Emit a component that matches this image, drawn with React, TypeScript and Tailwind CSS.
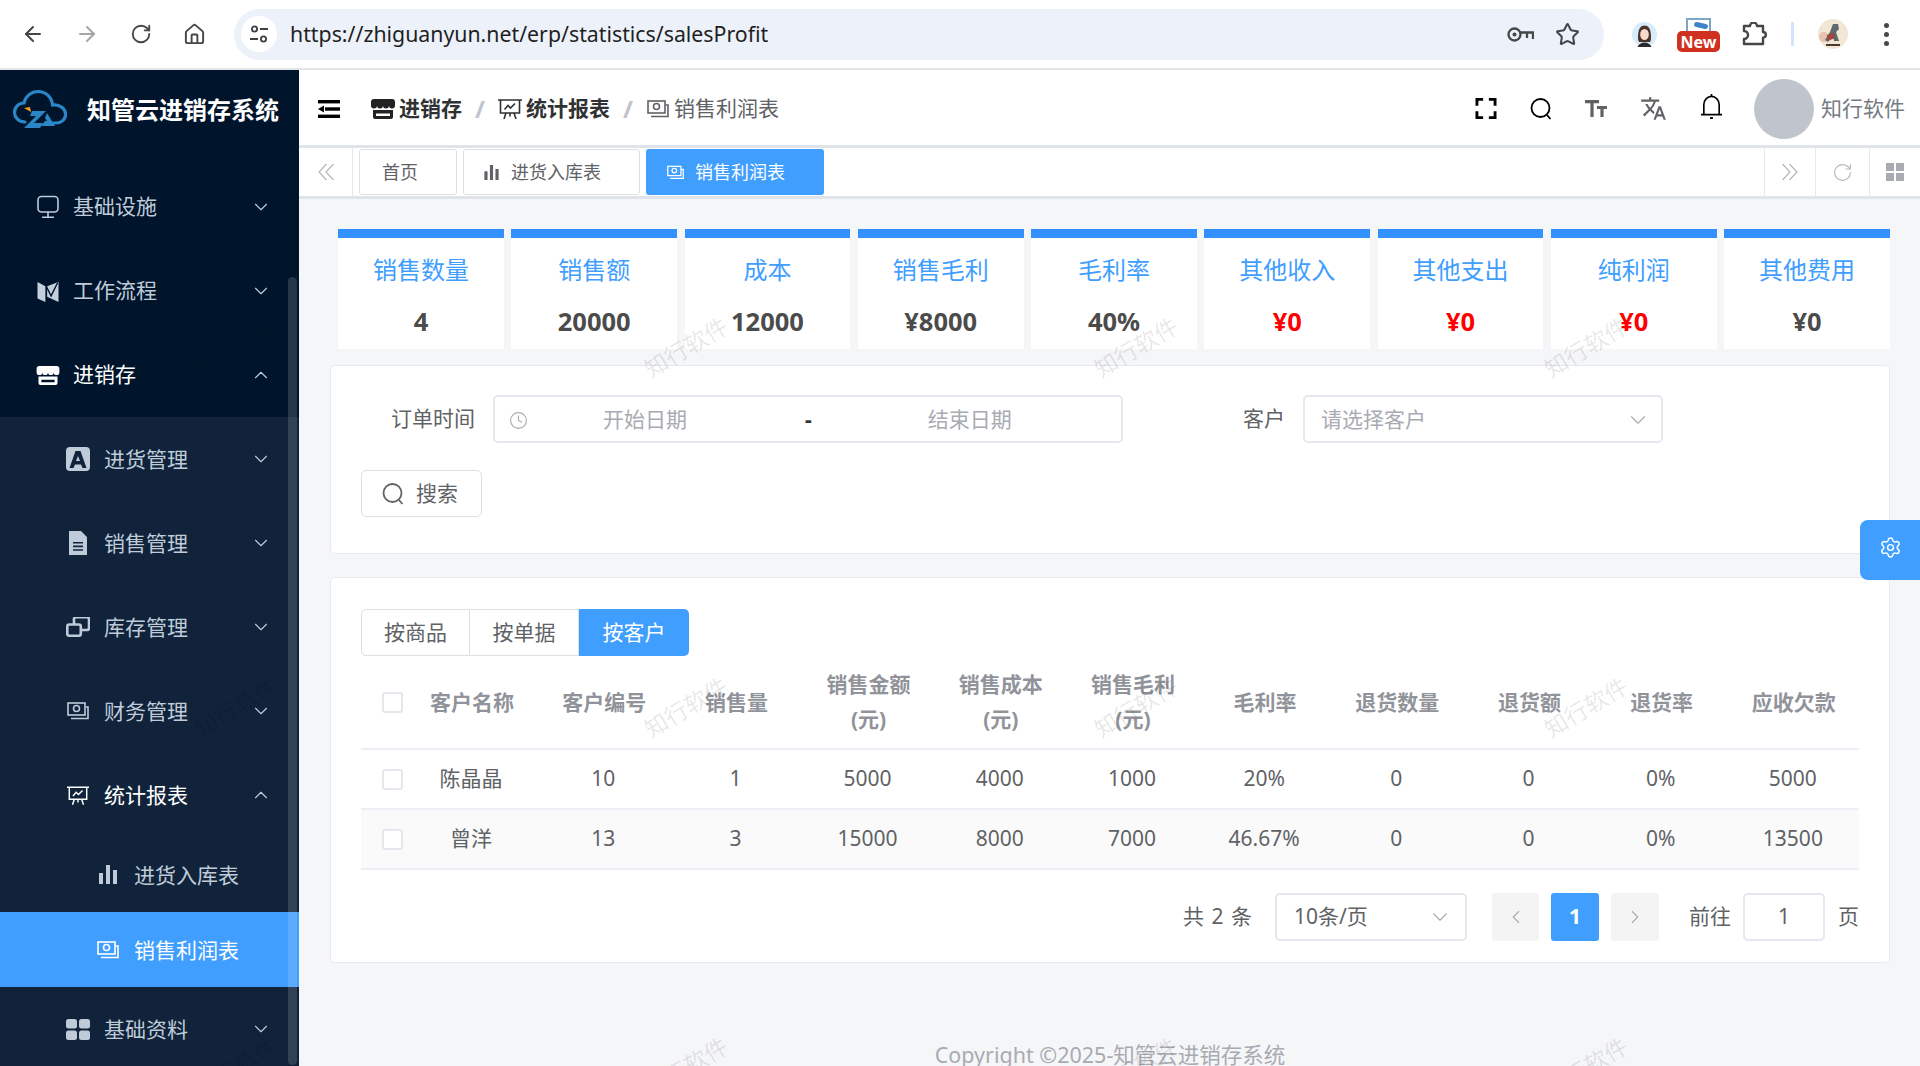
import React from 'react';
import {
  ArrowLeft,
  ArrowRight,
  ChevronDown,
  ChevronLeft,
  ChevronRight,
  ChevronUp,
  Clock,
  Home,
  RotateCw,
  Settings,
  Star,
} from 'lucide-react';
import { MdTranslate } from 'react-icons/md';

type IconProps = { className?: string };

const StoreIcon = ({ className }: IconProps) => (
  <svg viewBox="0 0 24 20" fill="currentColor" className={className}>
    <path d="M3 0h18a3 3 0 0 1 3 3v3.500a3 3 0 0 1-6 0 3 3 0 0 1-6 0 3 3 0 0 1-6 0 3 3 0 0 1-6 0V3a3 3 0 0 1 3-3z" />
    <path fillRule="evenodd" d="M2 11h20v7a2 2 0 0 1-2 2H4a2 2 0 0 1-2-2v-7zm3 3.500V17h14v-2.500H5z" />
  </svg>
);

const MapIcon = ({ className }: IconProps) => (
  <svg viewBox="0 0 24 24" fill="currentColor" className={className}>
    <path d="M0 1l9 5v18l-9-4z" />
    <path d="M11 6L24 1v23l-13-6z" />
    <path d="M10 6l5.500 11L23 2" fill="none" stroke="#00152b" strokeWidth="1.600" />
  </svg>
);

const MonitorIcon = ({ className }: IconProps) => (
  <svg viewBox="0 0 24 24" fill="none" stroke="currentColor" strokeWidth="1.600" className={className}>
    <rect x="2" y="1.500" width="20" height="15.500" rx="3.500" />
    <path d="M12 17v5M6 22.200h12" />
  </svg>
);

const BadgeAIcon = ({ className }: IconProps) => (
  <svg viewBox="0 0 24 24" fill="currentColor" className={className}>
    <path
      fillRule="evenodd"
      d="M4 0h16a4 4 0 0 1 4 4v16a4 4 0 0 1-4 4H4a4 4 0 0 1-4-4V4a4 4 0 0 1 4-4zm5.500 4L3.500 21h4l1.500-3.500h6l1.500 3.500h4L14.500 4h-5zM12 9l2 5h-4l2-5z"
    />
  </svg>
);

const DocIcon = ({ className }: IconProps) => (
  <svg viewBox="0 0 18 24" fill="currentColor" className={className}>
    <path fillRule="evenodd" d="M0 0h12l6 6v18H0V0zm4 11v1.600h10V11H4zm0 3.600v1.600h10v-1.600H4zm0 3.600v1.600h10v-1.600H4z" />
  </svg>
);

const CopyIcon = ({ className }: IconProps) => (
  <svg viewBox="0 0 24 20" fill="none" stroke="currentColor" strokeWidth="2.600" className={className}>
    <path d="M8 7V3a2 2 0 0 1 2-2.700h11a2 2 0 0 1 2 2V11a2 2 0 0 1-2 2h-6" />
    <rect x="1.300" y="7.500" width="13.500" height="11.200" rx="2" />
  </svg>
);

const MoneyIcon = ({ className }: IconProps) => (
  <svg viewBox="0 0 22 18" fill="none" stroke="currentColor" strokeWidth="1.600" className={className}>
    <rect x="1" y="1" width="17" height="12" />
    <circle cx="9.500" cy="6.500" r="3" />
    <path d="M4 16.500h17V5h-2.500" />
  </svg>
);

const ChartIcon = ({ className }: IconProps) => (
  <svg viewBox="0 0 24 20" fill="none" stroke="currentColor" strokeWidth="1.600" className={className}>
    <path d="M0 1h24M2.500 1v13h19V1M8 14l-2 6M16 14l2 6M12 14v3.500" />
    <path d="M6.500 10.500l3.500-4 2.500 2.500L17 4.500" />
  </svg>
);

const BarsIcon = ({ className }: IconProps) => (
  <svg viewBox="0 0 18 19" fill="currentColor" className={className}>
    <rect x="0" y="8" width="4" height="11" />
    <rect x="7" y="0" width="4" height="19" />
    <rect x="14" y="5" width="4" height="14" />
  </svg>
);

const GridIcon = ({ className }: IconProps) => (
  <svg viewBox="0 0 24 21" fill="currentColor" className={className}>
    <rect x="0" y="0" width="11" height="9.500" rx="2.500" />
    <rect x="13" y="0" width="11" height="9.500" rx="2.500" />
    <rect x="0" y="11.500" width="11" height="9.500" rx="2.500" />
    <rect x="13" y="11.500" width="11" height="9.500" rx="2.500" />
  </svg>
);

const SearchIcon = ({ className }: IconProps) => (
  <svg viewBox="0 0 22 22" fill="none" stroke="currentColor" strokeWidth="1.800" className={className}>
    <circle cx="10.500" cy="10" r="9" />
    <path d="M17 17l3.500 4" />
  </svg>
);

const FullscreenIcon = ({ className }: IconProps) => (
  <svg viewBox="0 0 22 22" fill="none" stroke="currentColor" strokeWidth="3" className={className}>
    <path d="M1.500 8V1.500H8M14 1.500h6.500V8M20.500 14v6.500H14M8 20.500H1.500V14" />
  </svg>
);

const HamburgerIcon = ({ className }: IconProps) => (
  <svg viewBox="0 0 22 18" fill="currentColor" className={className}>
    <rect x="0" y="0" width="22" height="3.400" />
    <rect x="7" y="7.300" width="15" height="3.400" />
    <rect x="0" y="14.600" width="22" height="3.400" />
    <path d="M0 9l6-3.600v7.200z" />
  </svg>
);

const TextSizeIcon = ({ className }: IconProps) => (
  <svg viewBox="0 0 22 17" fill="none" stroke="currentColor" strokeWidth="3.200" className={className}>
    <path d="M0 1.600h14M7 1.600V17M12 7.500h10M17 7.500V17" />
  </svg>
);

const BellIcon = ({ className }: IconProps) => (
  <svg viewBox="0 0 24 26" fill="none" stroke="currentColor" strokeWidth="1.700" className={className}>
    <path d="M4 21V11a8 8.500 0 0 1 16 0v10" />
    <path d="M1 21.500h22M12 0v2.500" />
    <path d="M10.500 25h3" strokeWidth="2" />
  </svg>
);

const KeyIcon = ({ className }: IconProps) => (
  <svg viewBox="0 0 27 15" fill="none" stroke="currentColor" strokeWidth="2.300" className={className}>
    <circle cx="7.500" cy="7.500" r="6" />
    <circle cx="7.500" cy="7.500" r="2" fill="currentColor" stroke="none" />
    <path d="M13.500 5.500H26V12M20 5.500V11" />
  </svg>
);

const DoubleLeft = ({ className }: IconProps) => (
  <svg viewBox="0 0 16 18" fill="none" stroke="currentColor" strokeWidth="1.200" className={className}>
    <path d="M8.500 1L1 9l7.500 8M15.500 1L8 9l7.500 8" />
  </svg>
);

const DoubleRight = ({ className }: IconProps) => (
  <svg viewBox="0 0 16 18" fill="none" stroke="currentColor" strokeWidth="1.200" className={className}>
    <path d="M7.500 1L15 9l-7.500 8M0.500 1L8 9l-7.500 8" />
  </svg>
);

const Logo = () => (
  <svg viewBox="0 0 56 42" fill="none" className="h-[42px] w-[56px]">
    <path
      d="M13 33C6 33 2.500 28 2.500 23.500 2.500 18 7 14 12 14c1.500-7 7.500-11.500 14-11.500 8.500 0 14 6.500 14.500 13.500 7-1 13 3.500 13 9.500 0 5-4 8.500-9.500 8.500h-3"
      stroke="#2a86c6"
      strokeWidth="3.200"
      strokeLinecap="round"
    />
    <path d="M12 19l6-1 1 5z" fill="#f0a020" />
    <path d="M20 22h14l-12 12h9l-3 5H12l12-12h-6z" fill="#2a86c6" />
    <path d="M35 24l8 13h-14l4-5h2l-2-3z" fill="#2a86c6" />
  </svg>
);

const TuneIcon = () => (
  <svg viewBox="0 0 20 20" fill="none" stroke="#3c4043" strokeWidth="1.800" className="h-[20px] w-[20px]">
    <circle cx="5.500" cy="5" r="2.600" />
    <path d="M11 5h8M1 15h8" />
    <circle cx="14.500" cy="15" r="2.600" />
  </svg>
);

const PuzzleIcon = () => (
  <svg viewBox="0 0 25 24" fill="none" stroke="#444746" strokeWidth="2.400" strokeLinejoin="round" className="h-[24px] w-[25px]">
    <path d="M2 4h6a3.500 3.500 0 0 1 7 0h6v6a2.800 2.800 0 0 1 0 5.600V22H2v-5a4 4 0 0 0 0-8V4z" />
  </svg>
);

const GirlAvatar = () => (
  <svg viewBox="0 0 25 25" className="h-[25px] w-[25px]">
    <circle cx="12.500" cy="12.500" r="12.500" fill="#d6ecfb" />
    <path d="M6 15C6 6 9 3.500 12.500 3.500S19 6 19 15c0 3-.5 4-1 5H7c-.5-1-1-2-1-5z" fill="#4a3228" />
    <ellipse cx="12.500" cy="12.500" rx="4.300" ry="5.500" fill="#f8dccb" />
    <path d="M5.500 25c1-3 4-4.500 7-4.500s6 1.500 7 4.500z" fill="#2b2b2b" />
  </svg>
);

const ArtAvatar = () => (
  <svg viewBox="0 0 30 30" className="h-[30px] w-[30px]">
    <circle cx="15" cy="15" r="15" fill="#f2e6d4" />
    <circle cx="6" cy="18" r="5" fill="#e7c3b0" />
    <path d="M15 5h5l1 5-3 3 3 9h-5l-1-6-5 7-3-2 5-8z" fill="#5c6a6e" />
    <path d="M9 16l7-2 1 5-7 3z" fill="#a0473e" />
    <path d="M8 25h14v2H8z" fill="#4a3a30" />
  </svg>
);

const NewBadge = () => (
  <div className="relative h-[34px] w-[43px]">
    <div className="absolute left-[9px] top-0 h-[18px] w-[25px] border-2 border-[#7ea6c9] bg-white">
      <div className="ml-[6px] mt-[3px] h-[5px] w-[14px] rotate-12 rounded-full bg-[#3d85c6]" />
    </div>
    <div className="absolute bottom-0 left-0 flex h-[21px] w-[43px] items-center justify-center rounded-[5px] bg-[#d0301f] text-[16px] font-bold leading-none text-white">
      New
    </div>
  </div>
);

const ChromeBar = () => (
  <div className="flex h-[70px] shrink-0 items-center border-b-2 border-[#e4e5e7] bg-white">
    <div className="flex w-[234px] items-center pl-[21px] text-[#444746]">
      <ArrowLeft size={24} strokeWidth={2} />
      <ArrowRight size={24} strokeWidth={2} className="ml-[30px] text-[#a3a5a8]" />
      <RotateCw size={22} strokeWidth={2} className="ml-[31px]" />
      <Home size={23} strokeWidth={2} className="ml-[31px]" />
    </div>
    <div className="flex h-[51px] w-[1370px] items-center rounded-full bg-[#ecf1fa] pl-[7px] pr-[24px]">
      <div className="flex h-[36px] w-[36px] items-center justify-center rounded-full bg-white">
        <TuneIcon />
      </div>
      <span className="ml-[13px] text-[21.3px] text-[#1f1f1f]">https://zhiguanyun.net/erp/statistics/salesProfit</span>
      <KeyIcon className="ml-auto h-[15px] w-[27px] text-[#444746]" />
      <Star size={25} strokeWidth={2} className="ml-[21px] text-[#444746]" />
    </div>
    <div className="ml-[28px]">
      <GirlAvatar />
    </div>
    <div className="ml-[20px] mt-[2px]">
      <NewBadge />
    </div>
    <div className="ml-[22px]">
      <PuzzleIcon />
    </div>
    <div className="ml-[24px] h-[24px] w-[3px] bg-[#d3e3fd]" />
    <div className="ml-[24px]">
      <ArtAvatar />
    </div>
    <div className="ml-[36px] flex flex-col gap-[4px]">
      <span className="h-[5px] w-[5px] rounded-full bg-[#444746]" />
      <span className="h-[5px] w-[5px] rounded-full bg-[#444746]" />
      <span className="h-[5px] w-[5px] rounded-full bg-[#444746]" />
    </div>
  </div>
);

const TopItem = ({ icon, label, open, active }: { icon: React.ReactNode; label: string; open?: boolean; active?: boolean }) => (
  <div className={`flex h-[84px] items-center pl-[36px] text-[21px] ${active ? 'text-white' : 'text-[#bfcbd9]'}`}>
    <span className="flex w-[24px] justify-center">{icon}</span>
    <span className="ml-[13px]">{label}</span>
    <span className="ml-auto mr-[27px] text-[#bfcbd9]">
      {open ? <ChevronUp size={22} strokeWidth={1.2} /> : <ChevronDown size={22} strokeWidth={1.2} />}
    </span>
  </div>
);

const SubItem = ({ icon, label, open, active }: { icon: React.ReactNode; label: string; open?: boolean; active?: boolean }) => (
  <div className={`flex h-[84px] items-center pl-[66px] text-[21px] ${active ? 'text-white' : 'text-[#bfcbd9]'}`}>
    <span className="flex w-[24px] justify-center">{icon}</span>
    <span className="ml-[14px] pt-[2px]">{label}</span>
    <span className="ml-auto mr-[27px] text-[#bfcbd9]">
      {open ? <ChevronUp size={22} strokeWidth={1.2} /> : <ChevronDown size={22} strokeWidth={1.2} />}
    </span>
  </div>
);

const Sidebar = () => (
  <aside className="relative h-full w-[299px] shrink-0 overflow-hidden bg-[#00152b]">
    <div className="flex h-[95px] items-center pb-[16px] pl-[12px]">
      <Logo />
      <span className="ml-[19px] text-[24px] font-bold text-white">知管云进销存系统</span>
    </div>
    <TopItem icon={<MonitorIcon className="h-[24px] w-[24px]" />} label="基础设施" />
    <TopItem icon={<MapIcon className="h-[21px] w-[24px] text-[#c5d0de]" />} label="工作流程" />
    <TopItem icon={<StoreIcon className="h-[19px] w-[24px]" />} label="进销存" open active />
    <div className="bg-[#10233a]">
      <SubItem icon={<BadgeAIcon className="h-[24px] w-[24px]" />} label="进货管理" />
      <SubItem icon={<DocIcon className="h-[24px] w-[18px]" />} label="销售管理" />
      <SubItem icon={<CopyIcon className="h-[20px] w-[24px]" />} label="库存管理" />
      <SubItem icon={<MoneyIcon className="h-[18px] w-[22px]" />} label="财务管理" />
      <SubItem icon={<ChartIcon className="h-[19px] w-[22px]" />} label="统计报表" open active />
      <div className="flex h-[75px] items-center pl-[97px] text-[21px] text-[#bfcbd9]">
        <span className="flex w-[22px] justify-center">
          <BarsIcon className="h-[19px] w-[18px]" />
        </span>
        <span className="ml-[15px] pt-[2px]">进货入库表</span>
      </div>
      <div className="flex h-[75px] items-center bg-[#409eff] pl-[97px] text-[21px] text-white">
        <span className="flex w-[22px] justify-center">
          <MoneyIcon className="h-[18px] w-[22px]" />
        </span>
        <span className="ml-[15px] pt-[2px]">销售利润表</span>
      </div>
      <SubItem icon={<GridIcon className="h-[21px] w-[24px]" />} label="基础资料" />
    </div>
    <div className="absolute bottom-[1px] right-[2px] top-[207px] w-[9px] rounded-full bg-[rgba(255,255,255,0.14)]" />
  </aside>
);

const Slash = () => <span className="w-[36px] text-center text-[24px] font-bold leading-none text-[#c0c4cc]">/</span>;

const Header = () => (
  <div className="flex h-[78px] shrink-0 items-center border-b-[3px] border-[#dfe3ea] bg-white pl-[19px] pr-[15px] pt-[2px] text-[21px]">
    <HamburgerIcon className="h-[18px] w-[22px] text-black" />
    <div className="ml-[31px] flex items-center">
      <StoreIcon className="h-[20px] w-[24px] text-[#222]" />
      <span className="ml-[4px] font-bold text-[#303133]">进销存</span>
      <Slash />
      <ChartIcon className="h-[20px] w-[24px] text-[#303133]" />
      <span className="ml-[4px] font-bold text-[#303133]">统计报表</span>
      <Slash />
      <MoneyIcon className="h-[18px] w-[24px] text-[#606266]" />
      <span className="ml-[4px] text-[#606266]">销售利润表</span>
    </div>
    <div className="ml-auto flex items-center gap-[33px]">
      <FullscreenIcon className="h-[21px] w-[22px] text-black" />
      <SearchIcon className="h-[22px] w-[22px] text-black" />
      <TextSizeIcon className="h-[17px] w-[22px] text-[#606266]" />
      <MdTranslate className="h-[27px] w-[27px] text-[#606266]" />
      <BellIcon className="mb-[4px] h-[25px] w-[23px] text-black" />
      <div className="-ml-[2px] h-[60px] w-[60px] rounded-full bg-[#c0c4cc]" />
    </div>
    <span className="ml-[7px] text-[#767a82]">知行软件</span>
  </div>
);

const TabsRow = () => (
  <div className="flex h-[51px] shrink-0 items-stretch border-b-[3px] border-[#dfe3ea] bg-white">
    <div className="flex w-[54px] items-center justify-center border-r border-[#e4e7ed] text-[#b4b7bd]">
      <DoubleLeft className="h-[18px] w-[16px]" />
    </div>
    <div className="ml-[6px] mt-[1px] flex h-[46px] items-center gap-[6px] text-[18px]">
      <div className="flex h-full w-[98px] items-center rounded-[3px] border border-[#dcdfe6] pl-[22px] text-[#606266]">首页</div>
      <div className="flex h-full w-[177px] items-center rounded-[3px] border border-[#dcdfe6] pl-[20px] text-[#606266]">
        <BarsIcon className="h-[15px] w-[15px]" />
        <span className="ml-[12px]">进货入库表</span>
      </div>
      <div className="flex h-full w-[178px] items-center rounded-[3px] bg-[#409eff] pl-[21px] text-white">
        <MoneyIcon className="h-[15px] w-[17px]" />
        <span className="ml-[11px]">销售利润表</span>
      </div>
    </div>
    <div className="ml-auto flex">
      <div className="flex w-[51px] items-center justify-center border-l border-[#e4e7ed] text-[#b4b7bd]">
        <DoubleRight className="h-[18px] w-[16px]" />
      </div>
      <div className="flex w-[54px] items-center justify-center border-l border-[#e4e7ed] text-[#b4b7bd]">
        <RotateCw size={21} strokeWidth={1.3} />
      </div>
      <div className="flex w-[51px] items-center justify-center border-l border-[#e4e7ed]">
        <div className="grid h-[18px] w-[18px] grid-cols-2 gap-[2px]">
          <span className="bg-[#a8abb2]" />
          <span className="bg-[#a8abb2]" />
          <span className="bg-[#a8abb2]" />
          <span className="bg-[#a8abb2]" />
        </div>
      </div>
    </div>
  </div>
);

const stats = [
  { title: '销售数量', value: '4' },
  { title: '销售额', value: '20000' },
  { title: '成本', value: '12000' },
  { title: '销售毛利', value: '¥8000' },
  { title: '毛利率', value: '40%' },
  { title: '其他收入', value: '¥0', red: true },
  { title: '其他支出', value: '¥0', red: true },
  { title: '纯利润', value: '¥0', red: true },
  { title: '其他费用', value: '¥0' },
];

const StatCards = () => (
  <div className="ml-[8px] grid grid-cols-9 gap-[7.4px]">
    {stats.map((s) => (
      <div key={s.title} className="flex h-[120px] flex-col items-center border-t-[9px] border-[#3390ff] bg-white">
        <div className="mt-[15px] text-[24px] leading-[34px] text-[#409eff]">{s.title}</div>
        <div className={`mt-[17px] text-[25.5px] font-bold leading-[34px] ${s.red ? 'text-[#ff0000]' : 'text-[#4b4b4b]'}`}>{s.value}</div>
      </div>
    ))}
  </div>
);

const FilterPanel = () => (
  <div className="mt-[16px] h-[189px] rounded-[5px] border border-[#e6e9ef] bg-white pl-[30px] pt-[29px] text-[21px]">
    <div className="flex items-center">
      <span className="ml-[30px] w-[84px] text-[#606266]">订单时间</span>
      <div className="ml-[18px] flex h-[48px] w-[630px] items-center rounded-[5px] border-2 border-[#e4e7ed] pt-[2px] text-[#a8abb2]">
        <Clock size={19} strokeWidth={1.4} className="ml-[14px]" />
        <span className="ml-[75px]">开始日期</span>
        <span className="ml-[118px] font-bold text-[#303133]">-</span>
        <span className="ml-[116px]">结束日期</span>
      </div>
      <span className="ml-[120px] text-[#606266]">客户</span>
      <div className="ml-[18px] flex h-[48px] w-[360px] items-center rounded-[5px] border-2 border-[#e4e7ed] pl-[16px] pr-[10px] pt-[2px] text-[#a8abb2]">
        <span>请选择客户</span>
        <ChevronDown size={26} strokeWidth={1} className="ml-auto" />
      </div>
    </div>
    <button className="mt-[27px] flex h-[47px] w-[121px] items-center rounded-[5px] border border-[#dcdfe6] pl-[20px] text-[#606266]">
      <SearchIcon className="h-[22px] w-[22px]" />
      <span className="ml-[12px]">搜索</span>
    </button>
  </div>
);

const columns = [
  ['客户名称'],
  ['客户编号'],
  ['销售量'],
  ['销售金额', '(元)'],
  ['销售成本', '(元)'],
  ['销售毛利', '(元)'],
  ['毛利率'],
  ['退货数量'],
  ['退货额'],
  ['退货率'],
  ['应收欠款'],
];

const rows = [
  ['陈晶晶', '10', '1', '5000', '4000', '1000', '20%', '0', '0', '0%', '5000'],
  ['曾洋', '13', '3', '15000', '8000', '7000', '46.67%', '0', '0', '0%', '13500'],
];

const Checkbox = () => <div className="ml-[21px] h-[21px] w-[21px] rounded-[3px] border-2 border-[#e4e7ed] bg-white" />;

const DataTable = () => (
  <table className="w-[1498px] table-fixed border-collapse text-center text-[21px]">
    <colgroup>
      <col className="w-[44px]" />
    </colgroup>
    <thead>
      <tr className="h-[93px] border-b-2 border-[#ebeef5]">
        <th className="p-0 font-normal">
          <Checkbox />
        </th>
        {columns.map((c) => (
          <th key={c[0]} className="p-0 pl-[2px] font-bold leading-[35px] text-[#909399]">
            {c.map((line) => (
              <div key={line}>{line}</div>
            ))}
          </th>
        ))}
      </tr>
    </thead>
    <tbody className="text-[#606266]">
      {rows.map((r, i) => (
        <tr key={r[0]} className={`h-[60px] border-b-2 border-[#ebeef5] ${i === 1 ? 'bg-[#fafafa]' : 'bg-white'}`}>
          <td className="p-0">
            <Checkbox />
          </td>
          {r.map((cell, j) => (
            <td key={j} className="p-0">
              {cell}
            </td>
          ))}
        </tr>
      ))}
    </tbody>
  </table>
);

const Pagination = () => (
  <div className="mt-[23px] flex h-[48px] w-[1498px] items-center justify-end text-[21px] text-[#606266]">
    <span className="[word-spacing:2px]">共 2 条</span>
    <div className="ml-[23px] flex h-[48px] w-[192px] items-center rounded-[5px] border-2 border-[#e4e7ed] pl-[17px] pr-[12px]">
      <span>10条/页</span>
      <ChevronDown size={26} strokeWidth={1} className="ml-auto text-[#a8abb2]" />
    </div>
    <div className="ml-[25px] flex h-[48px] w-[47px] items-center justify-center rounded-[3px] bg-[#f4f4f5] text-[#a8abb2]">
      <ChevronLeft size={22} strokeWidth={1.2} />
    </div>
    <div className="ml-[12px] flex h-[48px] w-[48px] items-center justify-center rounded-[3px] bg-[#409eff] font-bold text-white">1</div>
    <div className="ml-[12px] flex h-[48px] w-[48px] items-center justify-center rounded-[3px] bg-[#f4f4f5] text-[#a8abb2]">
      <ChevronRight size={22} strokeWidth={1.2} />
    </div>
    <span className="ml-[30px]">前往</span>
    <div className="ml-[12px] flex h-[48px] w-[82px] items-center justify-center rounded-[5px] border-2 border-[#e4e7ed]">1</div>
    <span className="ml-[13px]">页</span>
  </div>
);

const TablePanel = () => (
  <div className="mt-[23px] h-[386px] rounded-[5px] border border-[#e6e9ef] bg-white pl-[30px] pt-[31px] text-[21px]">
    <div className="flex h-[47px] w-[328px] text-[#606266]">
      <div className="flex w-[109px] items-center justify-center rounded-l-[5px] border border-[#dcdfe6]">按商品</div>
      <div className="flex w-[109px] items-center justify-center border-y border-r border-[#dcdfe6]">按单据</div>
      <div className="flex w-[110px] items-center justify-center rounded-r-[5px] bg-[#409eff] text-white">按客户</div>
    </div>
    <DataTable />
    <Pagination />
  </div>
);

const Watermarks = () => (
  <div className="pointer-events-none absolute left-[11px] top-[167px] grid grid-cols-[repeat(4,450px)] auto-rows-[360px] place-items-center">
    {Array.from({ length: 12 }).map((_, i) => (
      <span key={i} className="-rotate-[31deg] whitespace-nowrap text-[23px] text-[rgba(0,0,0,0.1)]">
        知行软件
      </span>
    ))}
  </div>
);

export default function App() {
  return (
    <div className="relative flex h-[1066px] w-[1920px] flex-col overflow-hidden bg-white font-['Noto_Sans','Noto_Sans_CJK_SC',sans-serif]">
      <ChromeBar />
      <div className="flex min-h-0 flex-1">
        <Sidebar />
        <main className="flex min-w-0 flex-1 flex-col bg-[#f5f6f8]">
          <Header />
          <TabsRow />
          <div className="min-h-0 flex-1 overflow-hidden pl-[31px] pr-[30px] pt-[30px]">
            <StatCards />
            <FilterPanel />
            <TablePanel />
            <div className="mt-[77px] text-center text-[21.5px] leading-[30px] text-[#a8abb2]">Copyright ©2025-知管云进销存系统</div>
          </div>
        </main>
      </div>
      <Watermarks />
      <div className="absolute right-0 top-[520px] flex h-[60px] w-[60px] items-center justify-center rounded-l-[8px] bg-[#409eff] pb-[5px] text-white">
        <Settings size={23} strokeWidth={1.5} />
      </div>
    </div>
  );
}
